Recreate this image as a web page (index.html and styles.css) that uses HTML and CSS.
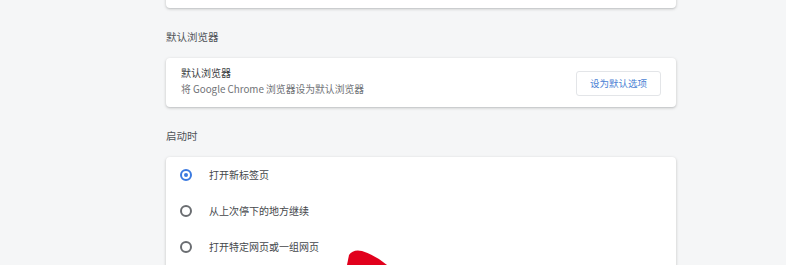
FILE: index.html
```html
<!DOCTYPE html>
<html lang="zh-CN">
<head>
<meta charset="utf-8">
<link rel="stylesheet" href="styles.css">
</head>
<body>
<div class="page">
  <div class="card card-top"></div>
  <div class="section-title">默认浏览器</div>
  <div class="card card-default">
    <div class="default-text">
      <div class="item-title">默认浏览器</div>
      <div class="item-sub">将 Google Chrome 浏览器设为默认浏览器</div>
    </div>
    <button class="btn">设为默认选项</button>
  </div>
  <div class="section-title">启动时</div>
  <div class="card card-startup">
    <div class="radio-row"><span class="radio checked"></span><span class="radio-label">打开新标签页</span></div>
    <div class="radio-row"><span class="radio"></span><span class="radio-label">从上次停下的地方继续</span></div>
    <div class="radio-row"><span class="radio"></span><span class="radio-label">打开特定网页或一组网页</span></div>
  </div>
</div>
<svg class="marker" width="60" height="20" viewBox="0 0 60 20">
  <path d="M2 20 L4 10 Q8 4 17 6 Q30 10 42 20 Z" fill="#e1001c"/>
</svg>
</body>
</html>
```

FILE: styles.css
```css
html, body {
  margin: 0;
  padding: 0;
}
body {
  background: #f5f6f7;
  width: 786px;
  height: 265px;
  overflow: hidden;
  position: relative;
  font-family: "Noto Sans CJK SC", "Noto Sans", "Liberation Sans", sans-serif;
  color: #3c4043;
}
.page {
  margin-left: 166px;
  width: 510px;
  display: flex;
  flex-direction: column;
}
.card {
  background: #fff;
  border-radius: 4px;
  box-shadow: 0 1px 2px rgba(60, 64, 67, 0.22), 0 1px 3px 1px rgba(60, 64, 67, 0.08);
}
.card-top {
  height: 20px;
  margin-top: -12px;
}
.section-title {
  font-size: 10.5px;
  line-height: 14px;
  color: #505357;
  padding-top: 22px;
  padding-bottom: 14px;
}
.card-default {
  height: 49px;
  display: flex;
  align-items: center;
  justify-content: space-between;
  padding: 0 15px 0 15px;
  box-sizing: border-box;
}
.default-text {
  display: flex;
  flex-direction: column;
  gap: 2px;
  margin-top: -3px;
}
.item-title {
  font-size: 10px;
  line-height: 14px;
  color: #3a3d41;
}
.item-sub {
  font-size: 9.8px;
  line-height: 14px;
  color: #6f7276;
}
.btn {
  font-family: inherit;
  font-size: 9.5px;
  color: #4a7fd4;
  background: #fff;
  border: 1px solid #e3e5e8;
  border-radius: 3px;
  width: 85px;
  height: 25px;
  padding: 0;
  margin-top: 1px;
}
.card-startup {
  height: 140px;
  display: flex;
  flex-direction: column;
}
.radio-row {
  height: 36px;
  display: flex;
  align-items: center;
  padding-left: 14px;
}
.radio {
  width: 8px;
  height: 8px;
  border: 2px solid #6a6d71;
  border-radius: 50%;
  position: relative;
  margin-right: 17px;
  flex: none;
}
.radio.checked {
  border-color: #3b7ae0;
}
.radio.checked::after {
  content: "";
  position: absolute;
  left: 2px;
  top: 2px;
  width: 4px;
  height: 4px;
  border-radius: 50%;
  background: #3b7ae0;
}
.radio-label {
  font-size: 10px;
  line-height: 14px;
  color: #44474b;
}
.marker {
  position: absolute;
  left: 345px;
  top: 245px;
}
```
